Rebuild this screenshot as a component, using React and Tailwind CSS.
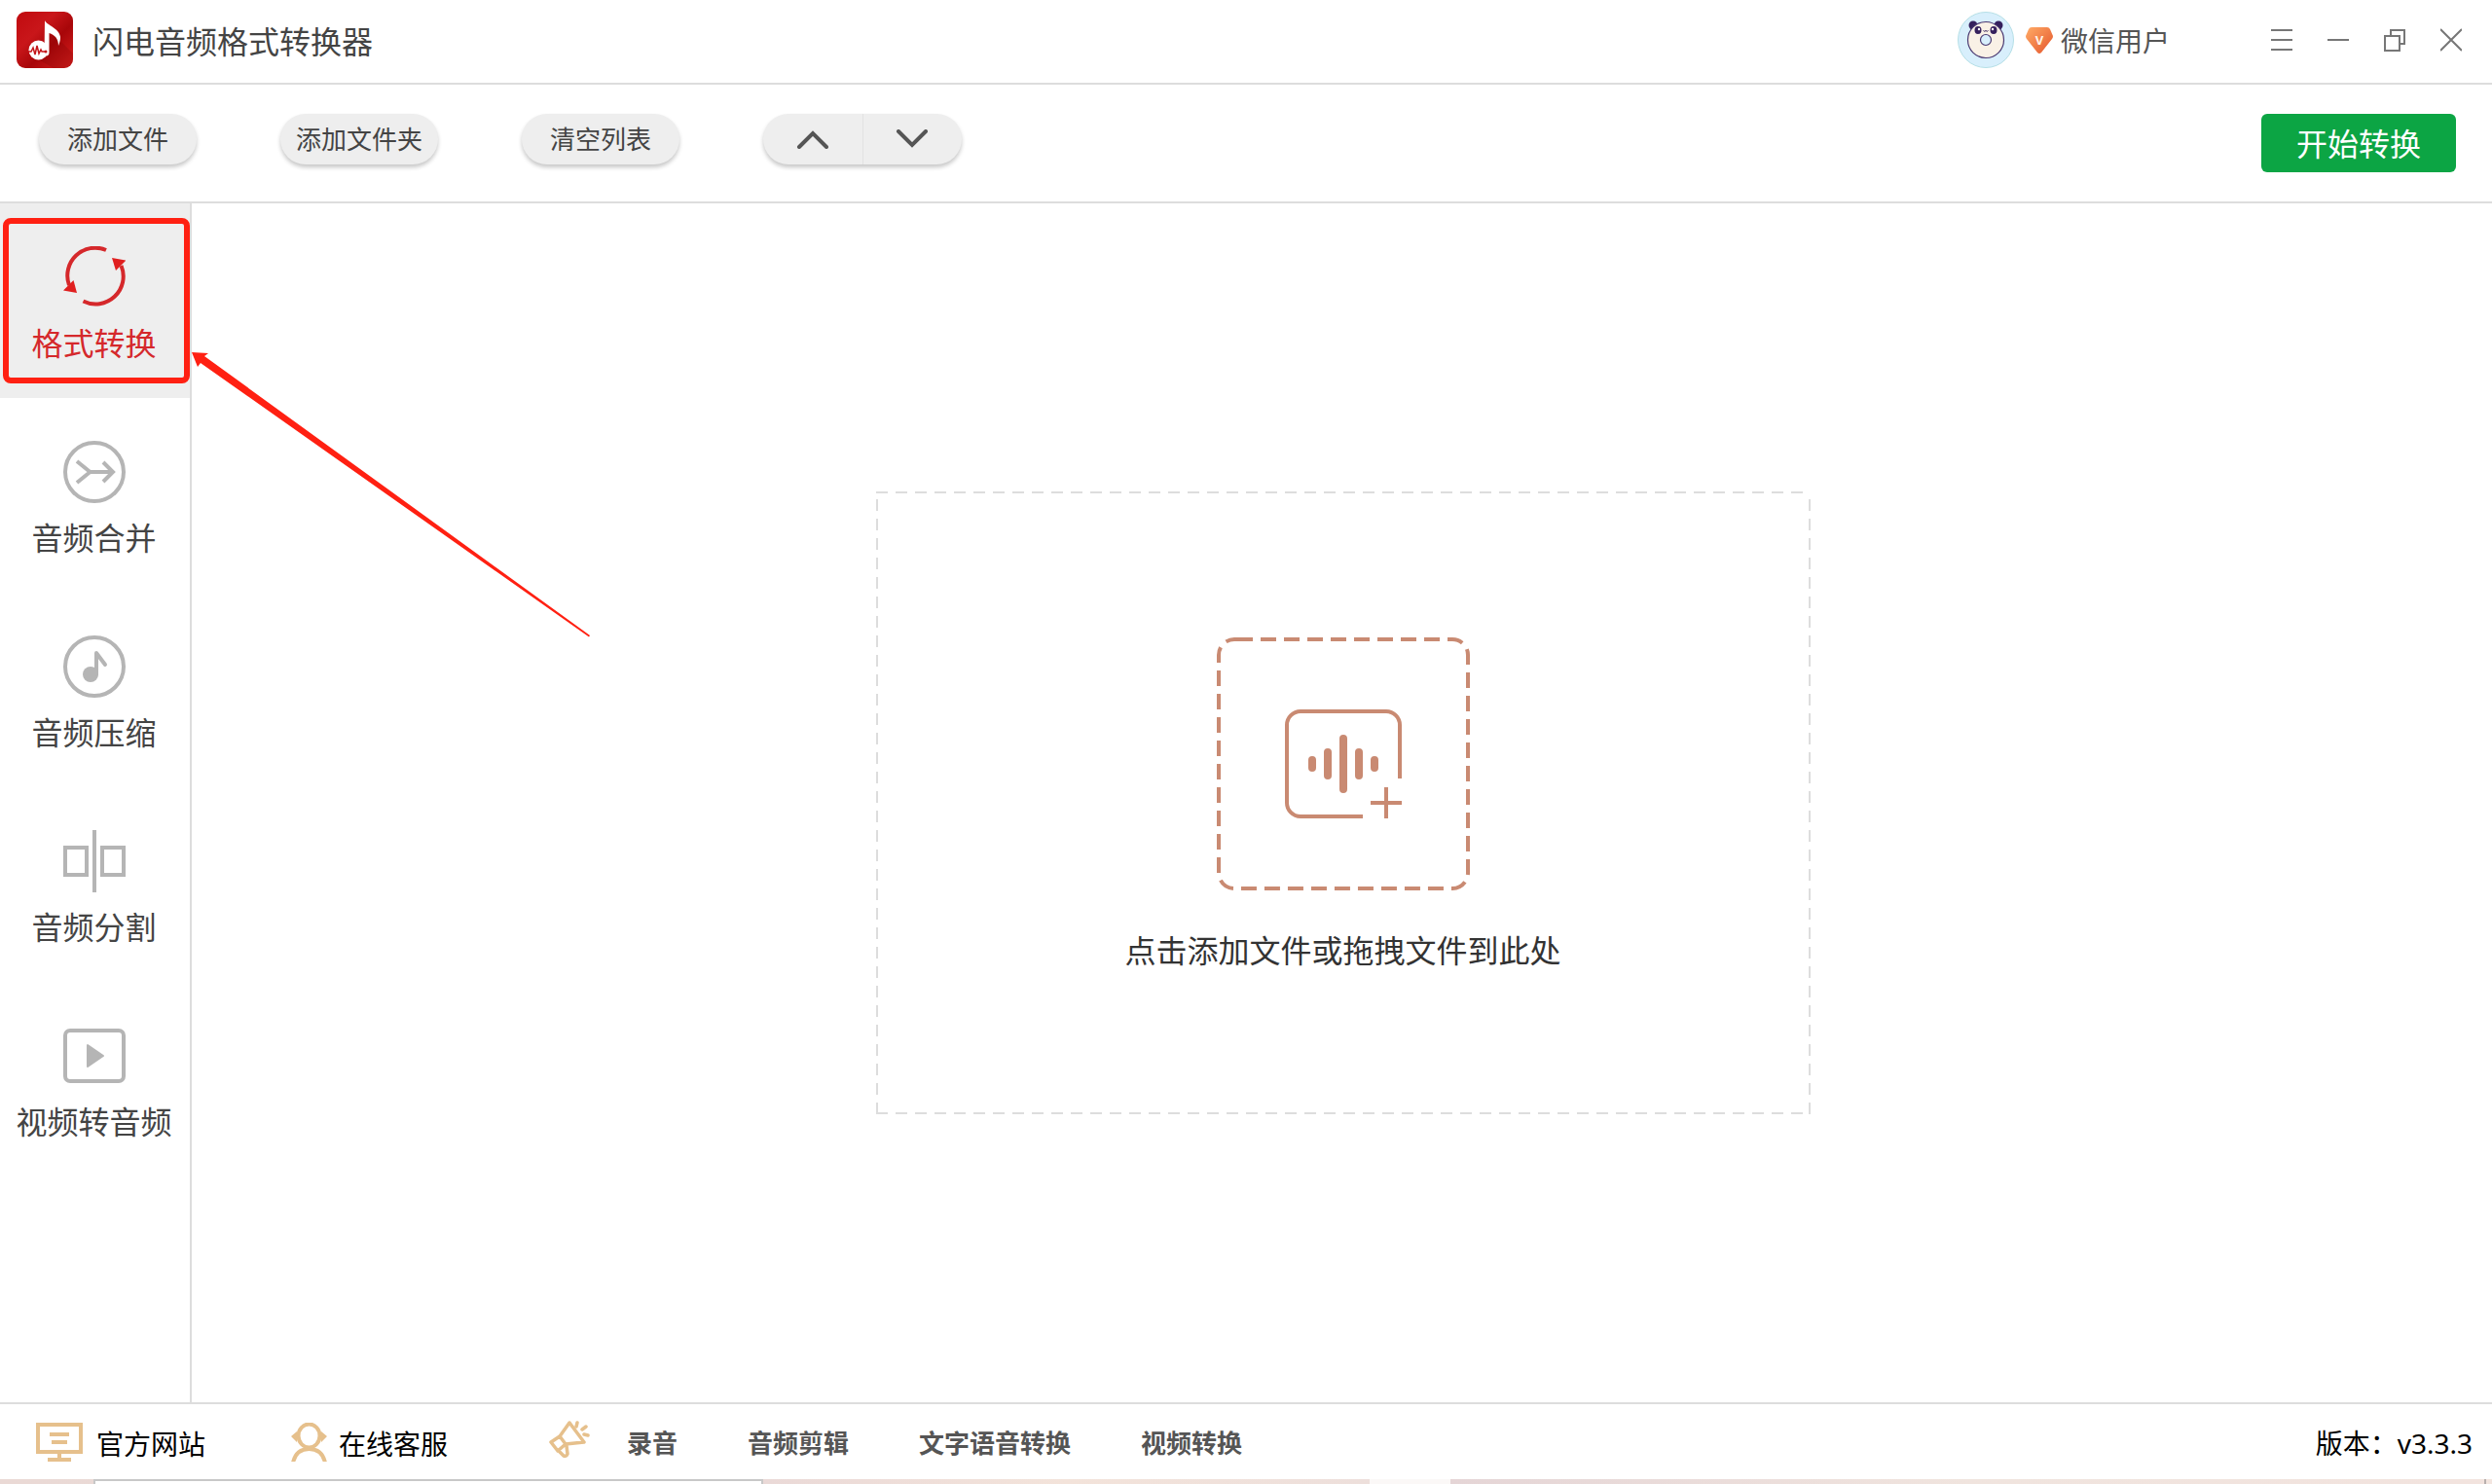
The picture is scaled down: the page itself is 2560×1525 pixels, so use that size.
import { useState } from "react";

const pillClass =
  "h-[52px] rounded-full bg-[#eeeeee] text-[26px] leading-[52px] text-[#444] shadow-[0_3px_4px_rgba(0,0,0,0.22)] hover:bg-[#e6e6e6]";

/* ========== ICONS ========== */
const LogoIcon = () => (
  <svg width="58" height="58" viewBox="0 0 58 58" aria-hidden="true">
    <defs>
      <linearGradient id="logoBg" x1="0" y1="0" x2="1" y2="1">
        <stop offset="0" stopColor="#c00a0f" />
        <stop offset="0.35" stopColor="#c9161a" />
        <stop offset="0.6" stopColor="#a80609" />
        <stop offset="1" stopColor="#d9201f" />
      </linearGradient>
    </defs>
    <rect width="58" height="58" rx="9" fill="url(#logoBg)" />
    <path d="M33 20 45 30 58 43v6a9 9 0 0 1-9 9H38L24 50l9-9z" fill="#7d0205" opacity="0.25" />
    <circle cx="22.500" cy="39.500" r="10" fill="#fff" />
    <path d="M29 9c2 5 15 8 16 17 0 4-1 6-2 9 0-8-4-11-9.500-13v20c0 3-2 4-5 3z" fill="#fff" />
    <path d="M12 41h3l2-4 2 7 2-9 2 8 2-4 1 2h4" fill="none" stroke="#c4161a" strokeWidth="1.500" />
    <circle cx="30" cy="41" r="1.500" fill="#c4161a" />
  </svg>
);

const AvatarIcon = () => (
  <svg width="58" height="58" viewBox="0 0 58 58" aria-hidden="true">
    <circle cx="29" cy="29" r="28.500" fill="#d8effc" stroke="#b5dfe6" />
    <circle cx="16" cy="14" r="4.500" fill="#35205c" />
    <circle cx="42" cy="14" r="4.500" fill="#35205c" />
    <circle cx="29" cy="29" r="18.500" fill="#f9f1e6" stroke="#4a3a72" strokeWidth="1.200" />
    <ellipse cx="21" cy="19" rx="3.500" ry="4" fill="#35205c" />
    <ellipse cx="37" cy="19" rx="3.500" ry="4" fill="#35205c" />
    <circle cx="22" cy="18" r="1.200" fill="#fff" />
    <circle cx="36" cy="18" r="1.200" fill="#fff" />
    <path d="M26.500 19.500q1.200 1.500 2.500 0 1.300 1.500 2.500 0" fill="none" stroke="#35205c" />
    <circle cx="29" cy="29" r="5.500" fill="#d8effc" stroke="#4a3a72" strokeWidth="1.200" />
  </svg>
);

const VipIcon = () => (
  <svg width="28" height="27" viewBox="0 0 28 27" aria-hidden="true">
    <defs>
      <linearGradient id="vipBg" x1="0" y1="0" x2="1" y2="1">
        <stop offset="0" stopColor="#ffab66" />
        <stop offset="1" stopColor="#e4552c" />
      </linearGradient>
    </defs>
    <path d="M6 0h16q2 0 3 2l3 7q0 2-1 3L16 26q-2 2-4 0L1 12q-1-1-1-3l3-7q1-2 3-2z" fill="url(#vipBg)" />
    <text x="14" y="18" textAnchor="middle" fontSize="13" fontWeight="700" fill="#fff3e8">
      V
    </text>
  </svg>
);

const ConvertIcon = () => (
  <svg width="64" height="64" viewBox="0 0 64 64" fill="none" stroke="#d5282b" strokeWidth="4" aria-hidden="true">
    <path d="M44 4A28.500 28.500 0 0 0 6 40" />
    <path d="M20.500 56.500A28.500 28.500 0 0 0 59.500 20" />
    <path d="M0 45.500 14 48 10.500 35z" fill="#e01f1f" stroke="none" />
    <path d="M64.500 14.500 50 12 54 25z" fill="#e01f1f" stroke="none" />
  </svg>
);

const MergeIcon = () => (
  <svg width="64" height="64" viewBox="0 0 64 64" fill="none" stroke="#b5b5b5" strokeWidth="4" aria-hidden="true">
    <circle cx="32" cy="32" r="30" />
    <path d="M14 21 27.500 32 14 43M27.500 32H51M41 22l10 10-10 10" />
  </svg>
);

const CompressIcon = () => (
  <svg width="64" height="64" viewBox="0 0 64 64" fill="none" stroke="#b5b5b5" strokeWidth="4" aria-hidden="true">
    <circle cx="32" cy="32" r="30" />
    <circle cx="28" cy="40" r="8" fill="#b5b5b5" stroke="none" />
    <path d="M34 40V18l9 12" strokeLinecap="round" strokeLinejoin="round" />
  </svg>
);

const SplitIcon = () => (
  <svg width="64" height="64" viewBox="0 0 64 64" fill="none" stroke="#b5b5b5" strokeWidth="4" aria-hidden="true">
    <rect x="2" y="18" width="22" height="28" />
    <rect x="40" y="18" width="22" height="28" />
    <path d="M32 0v64" />
  </svg>
);

const VideoIcon = () => (
  <svg width="64" height="64" viewBox="0 0 64 64" fill="none" stroke="#b5b5b5" strokeWidth="4" aria-hidden="true">
    <rect x="2" y="6" width="60" height="52" rx="5" />
    <path d="M25 21v22l16-11z" fill="#b5b5b5" strokeWidth="2" strokeLinejoin="round" />
  </svg>
);

const AddAudioIcon = () => (
  <svg width="260" height="260" viewBox="0 0 260 260" fill="none" stroke="#c98a72" strokeWidth="4" aria-hidden="true">
    <path
      d="M21 2H242A16 16 0 0 1 258 18V242A16 16 0 0 1 242 258H18A16 16 0 0 1 2 242V18A16 16 0 0 1 18 2H21"
      strokeDasharray="16 8"
    />
    <path d="M188 145V90a14 14 0 0 0-14-14H86a14 14 0 0 0-14 14v80a14 14 0 0 0 14 14h64" />
    <path d="M158 170h32M174 154v32" />
    <path d="M98 126v8M114 118v24M130 104v52M146 118v24M162 126v8" strokeWidth="8" strokeLinecap="round" />
  </svg>
);

const MonitorIcon = () => (
  <svg width="48" height="40" viewBox="0 0 48 40" fill="none" stroke="#e6c08c" strokeWidth="4" aria-hidden="true">
    <path d="M2 2h44v28H2zM24 30v8M12 38h24M14 12h20M16 20h16" />
  </svg>
);

const ServiceIcon = () => (
  <svg width="37" height="40" viewBox="0 0 37 40" fill="none" stroke="#e6c08c" strokeWidth="4" aria-hidden="true">
    <ellipse cx="18.500" cy="13.500" rx="11" ry="12" />
    <path d="M2 41C4 32 10 27 18.500 27S33 32 35 41" />
    <path d="M6 9 0 14l6 6zM31 9l6 5-6 6z" fill="#e6c08c" stroke="none" />
  </svg>
);

const HornIcon = () => (
  <svg
    width="42"
    height="40"
    viewBox="0 0 42 40"
    fill="none"
    stroke="#e6c08c"
    strokeWidth="3.500"
    strokeLinecap="round"
    strokeLinejoin="round"
    aria-hidden="true"
  >
    <path d="M21 2 36 22 17 24 9 31 2 22 11 16zM11 16l6 8M10 31l5 5q3 1 4-2l-1-8" />
    <path d="M29 2l-1 4M38 6l-4 3M40 15l-4-1" />
  </svg>
);

/* ========== DATA ========== */
const tabs = [
  { label: "格式转换", Icon: ConvertIcon },
  { label: "音频合并", Icon: MergeIcon },
  { label: "音频压缩", Icon: CompressIcon },
  { label: "音频分割", Icon: SplitIcon },
  { label: "视频转音频", Icon: VideoIcon },
];

const tools = ["录音", "音频剪辑", "文字语音转换", "视频转换"];

function TitleBar() {
  return (
    <header className="flex items-center justify-between border-b-2 border-[#dddddd] pt-3 pb-[15px] pl-[17px] pr-[31px]">
      <div className="flex items-center gap-5">
        <LogoIcon />
        <h1 className="pt-1 text-[32px] leading-[48px] text-[#444]">闪电音频格式转换器</h1>
      </div>
      <div className="flex items-center">
        <button className="flex items-center text-[28px] leading-10 text-[#555]">
          <AvatarIcon />
          <span className="mr-2 ml-3">
            <VipIcon />
          </span>
          <span className="pt-0.5">微信用户</span>
        </button>
        <div className="ml-[104px] flex items-center gap-9">
          <button aria-label="菜单">
            <svg width="22" height="24" viewBox="0 0 22 24" stroke="#777" strokeWidth="2">
              <path d="M0 2h22M0 12h22M0 22h22" />
            </svg>
          </button>
          <button aria-label="最小化">
            <svg width="22" height="24" viewBox="0 0 22 24" stroke="#777" strokeWidth="2">
              <path d="M0 12h22" />
            </svg>
          </button>
          <button aria-label="还原">
            <svg width="22" height="24" viewBox="0 0 22 24" fill="none" stroke="#777" strokeWidth="2">
              <path d="M1 8h15v15H1zM7 8V2h14v14h-5" />
            </svg>
          </button>
          <button aria-label="关闭">
            <svg width="22" height="24" viewBox="0 0 22 24" stroke="#777" strokeWidth="2">
              <path d="M0 1l22 22M22 1L0 23" />
            </svg>
          </button>
        </div>
      </div>
    </header>
  );
}

function Toolbar() {
  return (
    <div className="flex items-start justify-between border-b-2 border-[#dddddd] py-[30px] pl-10 pr-[37px]">
      <div className="flex gap-[86px]">
        <button className={`${pillClass} w-[162px]`}>添加文件</button>
        <button className={`${pillClass} w-[162px]`}>添加文件夹</button>
        <button className={`${pillClass} w-[162px]`}>清空列表</button>
        <div className={`${pillClass} flex w-[204px] overflow-hidden`}>
          <button aria-label="上移" className="flex flex-1 items-center justify-center border-r border-[#e2e2e2]">
            <svg width="34" height="20" viewBox="0 0 34 20" fill="none" stroke="#555" strokeWidth="4" strokeLinecap="round">
              <path d="M3 18 17 4l14 14" />
            </svg>
          </button>
          <button aria-label="下移" className="flex flex-1 items-center justify-center">
            <svg width="34" height="20" viewBox="0 0 34 20" fill="none" stroke="#555" strokeWidth="4" strokeLinecap="round">
              <path d="M3 2l14 14L31 2" />
            </svg>
          </button>
        </div>
      </div>
      <button className="w-[200px] rounded-md bg-[#0ca544] pt-0.5 text-[32px] leading-[58px] text-white hover:bg-[#0b963e]">
        开始转换
      </button>
    </div>
  );
}

function Sidebar({ active, onSelect }) {
  return (
    <nav className="relative w-[197px] shrink-0 border-r-2 border-[#dddddd]">
      {tabs.map(({ label, Icon }, i) => (
        <button
          key={label}
          onClick={() => onSelect(i)}
          className={`flex h-[200px] w-full flex-col items-center gap-3 pt-11 pr-0.5 text-[32px] leading-[48px] ${
            i === active ? "bg-[#eeeeee] text-[#d5282b]" : "text-[#444]"
          }`}
        >
          <Icon />
          {label}
        </button>
      ))}

      {/* Highlight frame and pointer over the first tab */}
      <div className="pointer-events-none absolute top-[15px] left-[3px] h-[170px] w-[192px] rounded-lg border-6 border-[#ff2012]" />
      <svg
        className="pointer-events-none absolute top-[153px] left-[197px] z-10"
        width="410"
        height="294"
        viewBox="0 0 410 294"
        fill="#ff2012"
        aria-hidden="true"
      >
        <path d="M0 0 17 1 13 4 409 291 408 292.500 9 11 6 15z" />
      </svg>
    </nav>
  );
}

function DropZone() {
  return (
    <main className="flex flex-1 items-center justify-center pl-0.5">
      <button className="relative flex h-[640px] w-[960px] flex-col items-center justify-center gap-9 pt-2 text-[32px] leading-[52px] text-[#333]">
        <svg className="absolute inset-0 h-full w-full" stroke="#dddddd" strokeWidth="2" strokeDasharray="12 8" aria-hidden="true">
          <line x1="0" y1="1" x2="100%" y2="1" />
          <line x1="0" y1="639" x2="100%" y2="639" />
          <line x1="1" y1="8" x2="1" y2="100%" />
          <line x1="959" y1="8" x2="959" y2="100%" />
        </svg>
        <AddAudioIcon />
        点击添加文件或拖拽文件到此处
      </button>
    </main>
  );
}

function Footer() {
  return (
    <footer className="flex h-[79px] items-center border-t-2 border-[#dddddd] pl-[37px] pr-5 text-[28px] leading-10 text-black">
      <a href="#site" className="flex items-center gap-3.5">
        <MonitorIcon />
        <span className="pt-1">官方网站</span>
      </a>
      <a href="#service" className="ml-[88px] flex items-center gap-3">
        <ServiceIcon />
        <span className="pt-1">在线客服</span>
      </a>
      <span className="mr-[38px] ml-[104px] pb-1">
        <HornIcon />
      </span>
      <div className="flex gap-[72px] pt-0.5 text-[26px] font-bold text-[#555]">
        {tools.map((tool) => (
          <a key={tool} href="#tools">
            {tool}
          </a>
        ))}
      </div>
      <span className="ml-auto pt-0.5">版本：v3.3.3</span>
    </footer>
  );
}

/* Sliver of the desktop under the window */
function DesktopEdge() {
  return (
    <div className="flex h-[5px] bg-linear-to-r from-[#ead9d5] via-[#e9dcdb] to-[#f3e5df]">
      <div className="w-[96px]" />
      <div className="w-[688px] border-x-2 border-t-2 border-[#c8c8c8] bg-white" />
      <div className="w-[623px] bg-linear-to-r from-[#ead9d7] via-[#f3e3da] to-[#eddfdb]" />
      <div className="w-[83px] bg-[#fbf8f7]" />
      <div className="flex-1 bg-linear-to-r from-[#e5d5d6] via-[#f0e4de] to-[#f2e3de]" />
      <div className="w-2 border-l-2 border-[#b8b0ae]" />
    </div>
  );
}

export default function App() {
  const [active, setActive] = useState(0);

  return (
    <div className="flex min-h-screen flex-col bg-white font-['Noto_Sans','Noto_Sans_CJK_SC',sans-serif]">
      <TitleBar />
      <Toolbar />
      <div className="flex flex-1">
        <Sidebar active={active} onSelect={setActive} />
        <DropZone />
      </div>
      <Footer />
      <DesktopEdge />
    </div>
  );
}
